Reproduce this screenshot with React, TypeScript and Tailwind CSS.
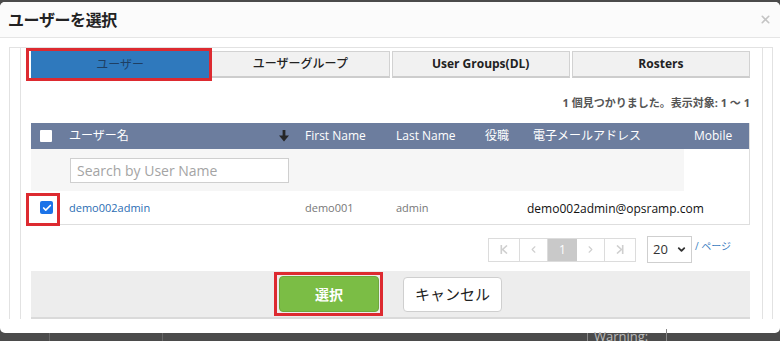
import React from 'react';
import { ChevronDown, ChevronLeft, ChevronRight, Check, X } from 'lucide-react';

const FONT = "font-['Open_Sans','Noto_Sans_CJK_JP',sans-serif]";

const TABS = [
  { label: 'ユーザー', active: true, jp: true },
  { label: 'ユーザーグループ', active: false, jp: true },
  { label: 'User Groups(DL)', active: false, jp: false },
  { label: 'Rosters', active: false, jp: false },
];

function EdgeIcon({ flip }: { flip?: boolean }) {
  return (
    <svg width="8" height="9" viewBox="0 0 8 9" className={flip ? 'rotate-180' : ''}>
      <rect x="0.5" y="0" width="1.6" height="9" fill="#cfcfcf" />
      <path d="M7 0.5 L2.6 4.5 L7 8.5" fill="none" stroke="#cfcfcf" strokeWidth="1.6" />
    </svg>
  );
}

function SortArrow() {
  return (
    <svg width="10" height="12" viewBox="0 0 10 12">
      <rect x="3.6" y="0" width="2.8" height="7" fill="#262626" />
      <path d="M0 5.5 L10 5.5 L5 11.5 Z" fill="#262626" />
    </svg>
  );
}

// red annotation box drawn over an element
function Mark({ className }: { className: string }) {
  return <span className={`absolute border-[3px] border-[#dd2a30] pointer-events-none ${className}`} />;
}

export default function App() {
  return (
    <div className={`w-[780px] h-[341px] overflow-hidden bg-[#4b4b4b] ${FONT}`}>
      <div className="mt-[2px] h-[331px] bg-white rounded-[5px] flex flex-col">
        {/* Header */}
        <div className="h-[36px] shrink-0 border-b border-[#e5e5e5] bg-[#fbfbfb] rounded-t-[5px] flex items-center justify-between pl-[8px] pr-[8px]">
          <h1 className="text-[16px] font-bold text-[#222] tracking-tight">ユーザーを選択</h1>
          <X className="w-[13px] h-[13px] text-[#c4c4c4]" strokeWidth={3} />
        </div>

        {/* Body */}
        <div className="pl-[9px] pr-[7px] pt-[9px]">
          <div className="h-[272px] border-x border-t border-[#e2e2e2] pl-[10px] pr-[9px]">
            <div className="h-full border-x border-[#e2e2e2] pl-[10px] pr-[12px] pt-[3px] overflow-hidden">
              {/* Tabs */}
              <div className="grid grid-cols-4 gap-[2px] h-[27px]">
                {TABS.map((t) => (
                  <div
                    key={t.label}
                    className={
                      t.active
                        ? 'relative flex items-center justify-center bg-[#2f79bd] text-[12px] text-[#1e3f63]'
                        : `flex items-center justify-center bg-[#f1f1f1] border border-[#d2d2d2] border-b-2 border-b-[#cdcdcd] text-[12px] text-[#222] ${t.jp ? 'font-medium' : 'font-bold'}`
                    }
                  >
                    {t.label}
                    {t.active && <Mark className="-left-[5px] -right-[3px] -top-[3px] -bottom-[3px]" />}
                  </div>
                ))}
              </div>

              {/* Count */}
              <div className="mt-[17px] h-[16px] flex justify-end items-center text-[11px] font-bold text-[#555]">
                1 個見つかりました。表示対象: 1 ～ 1
              </div>

              {/* Table */}
              <div className="mt-[12px] border-r border-[#dedede]">
                <div className="h-[26px] bg-[#6c7d9e] flex items-center text-[12px] text-white">
                  <div className="w-[31px] flex justify-end pr-[10px]">
                    <span className="w-[12px] h-[12px] bg-white rounded-[1px]" />
                  </div>
                  <div className="w-[236px] pl-[7px] flex items-center justify-between pr-[9px]">
                    <span>ユーザー名</span>
                    <SortArrow />
                  </div>
                  <div className="w-[91px] pl-[7px]">First Name</div>
                  <div className="w-[89px] pl-[7px]">Last Name</div>
                  <div className="w-[48px] pl-[7px]">役職</div>
                  <div className="w-[161px] pl-[7px]">電子メールアドレス</div>
                  <div className="flex-1 pl-[7px]">Mobile</div>
                </div>

                <div className="h-[42px] flex">
                  <div className="w-[653px] bg-[#f6f6f6] flex items-center pl-[39px]">
                    <input
                      placeholder="Search by User Name"
                      className="w-[219px] h-[25px] bg-white border border-[#cfcfcf] px-[6px] text-[14px] text-[#333] placeholder:text-[#a4a4a4] outline-none"
                    />
                  </div>
                </div>

                <div className="h-[34px] flex items-center border-b border-[#dedede] text-[11px] text-[#777]">
                  <div className="w-[31px] h-full relative flex items-center justify-end pr-[9px]">
                    <span className="w-[13px] h-[13px] bg-[#1c73e8] rounded-[2px] flex items-center justify-center">
                      <Check className="w-[10px] h-[10px] text-white" strokeWidth={4} />
                    </span>
                    <Mark className="left-[-5px] top-[2px] w-[34px] h-[33px]" />
                  </div>
                  <div className="w-[236px] pl-[7px] pt-[2px] text-[#2b6db3]">demo002admin</div>
                  <div className="w-[91px] pl-[7px] pt-[2px]">demo001</div>
                  <div className="w-[89px] pl-[7px] pt-[2px]">admin</div>
                  <div className="w-[48px]" />
                  <div className="w-[161px] pl-[1px] pt-[2px] text-[12px] text-[#111] whitespace-nowrap">demo002admin@opsramp.com</div>
                  <div className="flex-1" />
                </div>
              </div>

              {/* Pagination */}
              <div className="mt-[11px] h-[27px] flex items-center justify-end">
                <div className="flex h-[24px] border border-[#dcdcdc] text-[12px]">
                  <div className="w-[31px] flex items-center justify-center border-r border-[#dcdcdc]">
                    <EdgeIcon />
                  </div>
                  <div className="w-[28px] flex items-center justify-center border-r border-[#dcdcdc]">
                    <ChevronLeft className="w-[11px] h-[11px] text-[#cfcfcf]" strokeWidth={2.5} />
                  </div>
                  <div className="w-[29px] flex items-center justify-center bg-[#c9c9c9] text-white">1</div>
                  <div className="w-[28px] flex items-center justify-center border-r border-[#dcdcdc]">
                    <ChevronRight className="w-[11px] h-[11px] text-[#cfcfcf]" strokeWidth={2.5} />
                  </div>
                  <div className="w-[30px] flex items-center justify-center">
                    <EdgeIcon flip />
                  </div>
                </div>
                <div className="ml-[11px] w-[45px] h-[27px] border border-[#cfcfcf] flex items-center justify-between pl-[5px] pr-[4px] text-[13px] text-[#333]">
                  <span>20</span>
                  <ChevronDown className="w-[11px] h-[11px] text-[#333]" strokeWidth={4} />
                </div>
                <div className="ml-[3px] w-[55px] self-start pt-[3px] text-[10px] text-[#3a7cc0]">/ ページ</div>
              </div>

              {/* Footer */}
              <div className="mt-[8px] h-[48px] bg-[#ededed] border-b-2 border-[#dadada] flex items-center justify-center gap-[24px]">
                <button className="relative w-[100px] h-[36px] rounded-[4px] bg-[#7bbd45] border border-[#6ea83d] text-white text-[14px] font-bold">
                  選択
                  <Mark className="-left-[6px] -right-[5px] -top-[5px] -bottom-[5px]" />
                </button>
                <button className="w-[99px] h-[35px] rounded-[4px] bg-white border border-[#cfcfcf] text-[#222] text-[15px]">
                  キャンセル
                </button>
              </div>
            </div>
          </div>
        </div>
      </div>

      {/* background page peeking below */}
      <div className="h-[8px] flex text-[13px] text-[#aaa] leading-[14px]">
        <div className="w-[50px] border-r border-[#666]" />
        <div className="w-[113px] border-r border-[#666]" />
        <div className="w-[425px] border-r border-[#888]" />
        <div className="w-[79px] border-r border-[#888] pl-[6px] -mt-[4px] text-[#bbb]">Warning:</div>
      </div>
    </div>
  );
}
